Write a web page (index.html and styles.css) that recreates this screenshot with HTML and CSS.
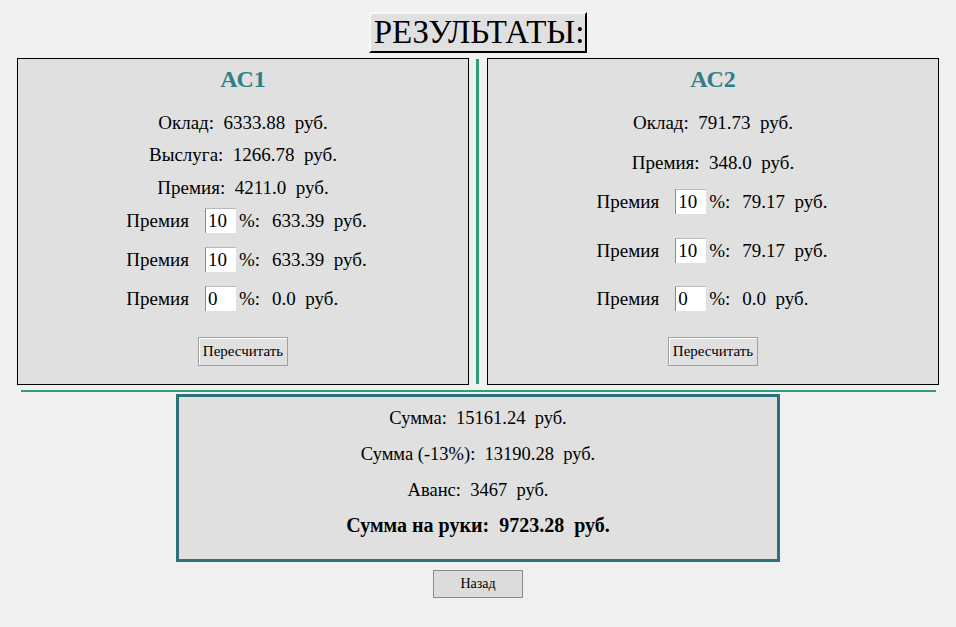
FILE: index.html
```html
<!DOCTYPE html>
<html lang="ru">
<head>
<meta charset="utf-8">
<title>Результаты</title>
<link rel="stylesheet" href="styles.css">
</head>
<body>
<div class="head"><h1 class="title">РЕЗУЛЬТАТЫ:</h1></div>
<div class="panels">
  <section class="panel panel-a">
    <h2 class="ac">АС1</h2>
    <p class="line l1">Оклад:&nbsp; 6333.88&nbsp; руб.</p>
    <p class="line l2">Выслуга:&nbsp; 1266.78&nbsp; руб.</p>
    <p class="line l3">Премия:&nbsp; 4211.0&nbsp; руб.</p>
    <div class="rows">
      <p class="row r1"><span class="lbl">Премия</span><input class="pct" value="10"><span class="pc">%:</span><span>633.39&nbsp; руб.</span></p>
      <p class="row r2"><span class="lbl">Премия</span><input class="pct" value="10"><span class="pc">%:</span><span>633.39&nbsp; руб.</span></p>
      <p class="row r3"><span class="lbl">Премия</span><input class="pct" value="0"><span class="pc">%:</span><span>0.0&nbsp; руб.</span></p>
    </div>
    <div class="btnrow"><button class="btn">Пересчитать</button></div>
  </section>
  <div class="vsep"></div>
  <section class="panel panel-b">
    <h2 class="ac">АС2</h2>
    <p class="line b1">Оклад:&nbsp; 791.73&nbsp; руб.</p>
    <p class="line b2">Премия:&nbsp; 348.0&nbsp; руб.</p>
    <div class="rows">
      <p class="row b3"><span class="lbl">Премия</span><input class="pct" value="10"><span class="pc">%:</span><span>79.17&nbsp; руб.</span></p>
      <p class="row b4"><span class="lbl">Премия</span><input class="pct" value="10"><span class="pc">%:</span><span>79.17&nbsp; руб.</span></p>
      <p class="row b5"><span class="lbl">Премия</span><input class="pct" value="0"><span class="pc">%:</span><span>0.0&nbsp; руб.</span></p>
    </div>
    <div class="btnrow"><button class="btn">Пересчитать</button></div>
  </section>
</div>
<div class="hsep"></div>
<div class="summary">
  <p class="sline">Сумма:&nbsp; 15161.24&nbsp; руб.</p>
  <p class="sline">Сумма (-13%):&nbsp; 13190.28&nbsp; руб.</p>
  <p class="sline">Аванс:&nbsp; 3467&nbsp; руб.</p>
  <p class="sline total">Сумма на руки:&nbsp; 9723.28&nbsp; руб.</p>
</div>
<div class="back"><button class="btn btn-back">Назад</button></div>
</body>
</html>
```
FILE: styles.css
```css
html, body {
  margin: 0;
  padding: 0;
}
body {
  background: #f0f0f0;
  font-family: "Liberation Serif", "Times New Roman", serif;
  color: #000;
  width: 956px;
}
p, h1, h2 { margin: 0; font-weight: normal; }

.head {
  display: flex;
  justify-content: center;
  padding-top: 12px;
}
.title {
  background: #e0e0e0;
  font-size: 33px;
  line-height: 37px;
  padding: 0 1px 0 3px;
  border-top: 2px solid #f8f8f8;
  border-left: 2px solid #f8f8f8;
  border-right: 2px solid #000;
  border-bottom: 2px solid #000;
}

.panels {
  display: flex;
  align-items: stretch;
  margin-top: 5px;
  padding-left: 17px;
}
.panel {
  box-sizing: border-box;
  width: 452px;
  height: 327px;
  background: #e0e0e0;
  border: 1px solid #000;
  display: flex;
  flex-direction: column;
  align-items: center;
}
.vsep {
  width: 3px;
  background: #2f9e78;
  margin: 1px 8px 1px 7px;
}
.ac {
  font-weight: bold;
  color: #2e7f87;
  font-size: 24px;
  line-height: 28px;
  margin-top: 6px;
}
.line, .row {
  font-size: 19px;
  line-height: 24px;
}
.rows {
  display: flex;
  flex-direction: column;
  align-items: flex-start;
}
.panel-a .rows { padding-left: 7px; }
.panel-b .rows { padding-right: 2px; }
.row {
  display: flex;
  align-items: center;
}
.lbl { margin-right: 16px; }
.pc { margin-right: 12px; }
.pct {
  box-sizing: border-box;
  width: 31px;
  height: 25px;
  margin-right: 3px;
  font-family: inherit;
  font-size: 19px;
  padding: 0 0 0 2px;
  background: #fff;
  border: none;
  border-left: 1px solid #8a8a8a;
  border-top: 1px solid #b8b8b8;
  outline: none;
}
.l1 { margin-top: 18px; }
.l2 { margin-top: 8px; }
.l3 { margin-top: 9px; }
.r1 { margin-top: 8px; }
.r2 { margin-top: 14px; }
.r3 { margin-top: 14px; }

.b1 { margin-top: 18px; }
.b2 { margin-top: 16px; }
.b3 { margin-top: 14px; }
.b4 { margin-top: 24px; }
.b5 { margin-top: 23px; }

.btnrow {
  margin-top: auto;
  margin-bottom: 18px;
}
.btn {
  font-family: "Liberation Serif", "Times New Roman", serif;
  font-size: 15px;
  background: #e0e0e0;
  color: #000;
  border: 1px solid #a0a0a0;
  box-shadow: inset 1px 1px 0 #fff;
  height: 29px;
  width: 90px;
  padding: 0;
}

.hsep {
  height: 2px;
  background: #2f9e78;
  margin: 5px 20px 0 21px;
}

.summary {
  box-sizing: border-box;
  width: 604px;
  height: 168px;
  margin: 2px auto 0;
  background: #e0e0e0;
  border: 3px solid #2e717c;
  display: flex;
  flex-direction: column;
  align-items: center;
  padding-top: 10px;
}
.sline {
  font-size: 18.5px;
  line-height: 22px;
  margin-bottom: 14px;
}
.total { font-weight: bold; font-size: 20px; margin-top: -1px; }

.back {
  display: flex;
  justify-content: center;
  margin-top: 8px;
}
.btn-back {
  width: 90px;
  height: 28px;
  font-size: 14px;
  background: #dcdcdc;
  border: 1px solid #8a8a8a;
  box-shadow: none;
}
```
